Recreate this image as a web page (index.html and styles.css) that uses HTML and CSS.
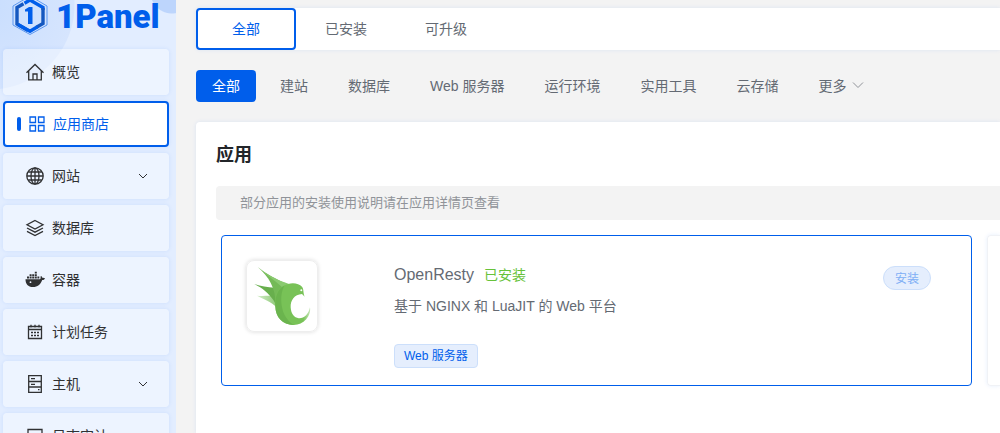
FILE: index.html
```html
<!DOCTYPE html>
<html lang="zh-CN">
<head>
  <meta charset="utf-8">
  <title>1Panel</title>
  <link rel="stylesheet" href="styles.css">
</head>
<body>
  <div class="app">
    <aside class="sidebar">
      <a class="logo" href="#">
        <svg class="logo-mark" width="36" height="36" viewBox="0 0 36 36" fill="none">
          <path d="M18 -4 L35 6 V25 L18 34.5 L1 25 V6 Z" stroke="#5b97f0" stroke-width="1"/>
          <path d="M16 30.5 L5 24 V7.5 L11.5 3.8" stroke="#1558c0" stroke-width="3.4"/>
          <path d="M12.5 3.2 L18 0 L31 7.5 V10" stroke="#005eeb" stroke-width="3.4"/>
          <path d="M31 8 V23.5 L24.5 27.3" stroke="#1558c0" stroke-width="3.4"/>
          <path d="M6 24.6 L18 31.2 L25.5 26.8" stroke="#005eeb" stroke-width="3.4"/>
          <path d="M13 9.5 L17 7 H20.5 V24 H16 V11.5 H13 Z" fill="#005eeb"/>
        </svg>
        <span class="logo-text">1Panel</span>
      </a>
      <nav class="menu">
        <a class="menu-item" href="#">
          <svg class="icon" viewBox="0 0 18 18"><path d="M.5 9.7 L9 1.5 L17.5 9.7 M2.7 8 V16.8 H15.3 V8 M7 16.5 V11 H11 V16.5"/></svg>
          <span>概览</span>
        </a>
        <a class="menu-item active" href="#">
          <svg class="icon" viewBox="0 0 16 16"><path d="M1 1 H6.5 V6.5 H1 Z M9.5 1 H15 V6.5 H9.5 Z M1 9.5 H6.5 V15 H1 Z M9.5 9.5 H15 V15 H9.5 Z"/></svg>
          <span>应用商店</span>
        </a>
        <a class="menu-item" href="#">
          <svg class="icon" viewBox="0 0 18 18"><circle cx="9" cy="9" r="8.2"/><ellipse cx="9" cy="9" rx="4" ry="8.2"/><path d="M9 1 V17 M1 9 H17 M2.2 5 H15.8 M2.2 13 H15.8"/></svg>
          <span>网站</span>
          <svg class="arrow" viewBox="0 0 10 10"><path d="M1 3 L5 7 L9 3"/></svg>
        </a>
        <a class="menu-item" href="#">
          <svg class="icon" viewBox="0 0 18 18"><path d="M9 1.5 L17 5.7 L9 10 L1 5.7 Z M1 9 L9 13.2 L17 9 M1 12.3 L9 16.5 L17 12.3"/></svg>
          <span>数据库</span>
        </a>
        <a class="menu-item" href="#">
          <svg class="icon solid" viewBox="0 0 18 18">
            <path d="M0 8.2 H14 C14.8 7.6 14.8 6.6 14.4 5.7 L15.3 5 C16 5.7 16.2 6.3 16.3 6.8 C17.3 6.6 18.2 6.8 19 7.2 C18.6 8.6 17.6 9 16.2 9 C14.6 13.6 11.5 16 7 16 C2 16 -.5 13 -.5 8.2 Z"/>
            <path d="M1 5.6 H3 V7.5 H1 Z M3.6 5.6 H5.6 V7.5 H3.6 Z M6.2 5.6 H8.2 V7.5 H6.2 Z M8.8 5.6 H10.8 V7.5 H8.8 Z M11.4 5.6 H13.3 V7.5 H11.4 Z M3.6 3.2 H5.6 V5 H3.6 Z M6.2 3.2 H8.2 V5 H6.2 Z M8.8 3.2 H10.8 V5 H8.8 Z M8.8 .8 H10.8 V2.6 H8.8 Z"/>
            <circle cx="4.5" cy="11.2" r=".9" fill="#edf3ff"/>
          </svg>
          <span>容器</span>
        </a>
        <a class="menu-item" href="#">
          <svg class="icon" viewBox="0 0 18 18"><path d="M2.5 3.5 H15.5 V15.5 H2.5 Z M2.5 6.5 H15.5 M5 1.8 V4.5 M9 1.8 V4.5 M13 1.8 V4.5"/><path d="M5 9.5 H13 M5 12.5 H13" stroke-dasharray="2 1"/></svg>
          <span>计划任务</span>
        </a>
        <a class="menu-item" href="#">
          <svg class="icon" viewBox="0 0 18 18"><path d="M2.7 .7 H15.3 V17.3 H2.7 Z M2.7 6.5 H15.3 M2.7 12 H15.3 M5 3.7 H9 M5 9.3 H9 M12 14.7 H13.5"/></svg>
          <span>主机</span>
          <svg class="arrow" viewBox="0 0 10 10"><path d="M1 3 L5 7 L9 3"/></svg>
        </a>
        <a class="menu-item" href="#">
          <svg class="icon" viewBox="0 0 18 18"><path d="M2 2.5 H16 V16 H2 Z M5 7 H9 M5 11 H12"/></svg>
          <span>日志审计</span>
        </a>
      </nav>
    </aside>

    <main class="main">
      <nav class="tabs">
        <button class="tab active" type="button">全部</button>
        <button class="tab" type="button">已安装</button>
        <button class="tab" type="button">可升级</button>
      </nav>

      <div class="tags">
        <button class="tag-btn active" type="button">全部</button>
        <button class="tag-btn" type="button">建站</button>
        <button class="tag-btn" type="button">数据库</button>
        <button class="tag-btn" type="button">Web 服务器</button>
        <button class="tag-btn" type="button">运行环境</button>
        <button class="tag-btn" type="button">实用工具</button>
        <button class="tag-btn" type="button">云存储</button>
        <button class="tag-btn more" type="button">更多
          <svg class="more-arrow" viewBox="0 0 12 12"><path d="M1 3.5 L6 8.5 L11 3.5"/></svg>
        </button>
      </div>

      <section class="panel">
        <h1 class="panel-title">应用</h1>
        <p class="notice">部分应用的安装使用说明请在应用详情页查看</p>
        <div class="app-list">
          <article class="app-card selected">
            <div class="app-icon">
              <svg viewBox="18 18 210 210">
                <defs>
                  <linearGradient id="tail" x1="0" y1="0" x2="1" y2="0">
                    <stop offset=".8" stop-color="#78c257"/>
                    <stop offset="1" stop-color="#c5e6b6"/>
                  </linearGradient>
                  <linearGradient id="feather" x1="0" y1="0" x2="1" y2="0">
                    <stop offset="0" stop-color="#d5eecb"/>
                    <stop offset="1" stop-color="#82c368"/>
                  </linearGradient>
                </defs>
                <path d="M48 122 C68 125 85 120 106 124 L116 168 C98 142 76 137 48 122 Z" fill="url(#feather)"/>
                <path d="M40 87 C60 94 80 97 100 98 L128 110 L124 190 C106 170 108 150 97 135 C82 114 65 100 40 87 Z" fill="#68af4d"/>
                <path d="M50 36 C78 58 108 74 140 88 L122 140 L104 150 C104 98 84 66 50 36 Z" fill="#74ba57"/>
                <path d="M64 48 C88 64 112 76 144 87 L126 100 C110 82 84 66 64 48 Z" fill="#8aca70"/>
                <path d="M128 92 C146 81 172 82 183 95 C189 103 186 112 191 125 L183 117 C160 118 148 136 149 157 C150 177 160 188 173 190 C190 191 203 177 207 157 C211 184 187 211 157 210 C126 209 104 188 103 153 C102 124 108 102 128 92 Z" fill="url(#tail)"/>
                <path d="M130 92 C116 118 119 155 131 181 C137 193 147 203 158 210 C124 209 103 187 103 153 C102 124 111 100 130 92 Z" fill="#6bb44e"/>
                <circle cx="181" cy="106" r="3" fill="#fff"/>
              </svg>
            </div>
            <div class="app-info">
              <div class="app-head">
                <span class="app-name">OpenResty</span>
                <span class="app-status">已安装</span>
                <button class="install" type="button" disabled>安装</button>
              </div>
              <p class="app-desc">基于 NGINX 和 LuaJIT 的 Web 平台</p>
              <span class="app-tag">Web 服务器</span>
            </div>
          </article>
          <article class="app-card next"></article>
        </div>
      </section>
    </main>
  </div>
</body>
</html>
```
FILE: styles.css
```css
* {
  box-sizing: border-box;
}

body {
  margin: 0;
  background: #f3f3f3;
  color: #646a73;
  font-family: "Liberation Sans", "Noto Sans CJK SC", sans-serif;
  font-size: 14px;
}

button {
  font-family: inherit;
  font-size: 14px;
  color: inherit;
  border: 0;
  background: none;
  padding: 0;
  cursor: pointer;
}

a {
  color: inherit;
  text-decoration: none;
}

svg {
  flex: none;
  overflow: visible;
}

.app {
  display: flex;
  height: 100vh;
  overflow: hidden;
}

/* sidebar */
.sidebar {
  flex: none;
  width: 176px;
  overflow: hidden;
  background:
    radial-gradient(circle at 172px -8px, #bdd5fc 21px, transparent 22px),
    radial-gradient(circle at -10px 5px, #c9defe 0, #d6e5fe 84px, transparent 85px),
    #e2edff;
}

.logo {
  display: flex;
  align-items: flex-start;
  gap: 8px;
  height: 49px;
  padding-left: 12px;
}

.logo-mark {
  overflow: hidden;
}

.logo-text {
  color: #005eeb;
  font-family: Roboto, sans-serif;
  font-size: 33px;
  font-weight: 900;
  line-height: 34px;
}

.menu {
  display: flex;
  flex-direction: column;
  gap: 6px;
  padding: 0 7px 0 3px;
}

.menu-item {
  display: flex;
  align-items: center;
  flex: none;
  gap: 8px;
  height: 46px;
  padding: 0 21px 0 23px;
  border-radius: 4px;
  background: rgba(255, 255, 255, 0.4);
  color: #303133;
  box-shadow: 0 0 4px rgba(0, 94, 235, 0.1);
}

.menu-item span {
  padding-bottom: 2px;
}

.menu-item.active {
  padding-left: 12px;
  border: 2px solid #005eeb;
  background: #fff;
  color: #005eeb;
}

.menu-item.active::before {
  content: "";
  width: 4px;
  height: 14px;
  border-radius: 2px;
  background: #005eeb;
}

.icon {
  width: 18px;
  height: 18px;
  fill: none;
  stroke: currentColor;
  stroke-width: 1.3;
}

.active .icon {
  width: 16px;
  height: 16px;
}

.icon.solid {
  fill: currentColor;
  stroke: none;
}

.arrow {
  width: 10px;
  height: 10px;
  margin-left: auto;
  fill: none;
  stroke: currentColor;
}

/* content */
.main {
  flex: 1;
  display: flex;
  flex-direction: column;
  gap: 20px;
  min-width: 0;
  padding: 8px 0 0 20px;
}

.tabs {
  display: flex;
  flex: none;
  height: 42px;
  border-radius: 4px 0 0 4px;
  background: #fff;
  box-shadow: 0 0 4px rgba(0, 94, 235, 0.1);
}

.tab {
  width: 100px;
  padding-bottom: 2px;
  border-radius: 4px;
}

.tab.active {
  border: 2px solid #005eeb;
  color: #005eeb;
}

.tags {
  display: flex;
  flex: none;
  gap: 8px;
}

.tag-btn {
  height: 32px;
  padding: 0 16px 2px;
  border-radius: 4px;
  white-space: nowrap;
}

.tag-btn.active {
  background: #005eeb;
  color: #fff;
}

.more {
  display: flex;
  align-items: center;
  gap: 6px;
}

.more-arrow {
  width: 12px;
  height: 12px;
  fill: none;
  stroke: #909399;
}

.panel {
  flex: 1;
  padding: 20px 0 0 20px;
  border-radius: 4px 0 0 0;
  background: #fff;
  box-shadow: 0 0 4px rgba(0, 94, 235, 0.1);
}

.panel-title {
  margin: 0 0 18px;
  color: #222529;
  font-size: 18px;
  line-height: 26px;
}

.notice {
  margin: 0 0 15px;
  padding: 0 24px;
  border-radius: 4px 0 0 4px;
  background: #f3f3f3;
  color: #909399;
  font-size: 13px;
  line-height: 34px;
}

.app-list {
  display: grid;
  grid-template-columns: 1fr 13px;
  gap: 15px;
  padding-left: 5px;
}

.app-card {
  display: flex;
  border: 1px solid #f0f2f6;
  border-radius: 4px;
  padding: 24px 40px 17px 24px;
}

.app-card.selected {
  border-color: #005eeb;
}

.app-card.next {
  padding: 0;
  border-right: 0;
  border-radius: 4px 0 0 4px;
  box-shadow: 0 0 4px rgba(0, 94, 235, 0.1);
}

.app-icon {
  flex: none;
  width: 72px;
  height: 72px;
  margin-right: 76px;
  border: 1px solid #eee;
  border-radius: 8px;
  box-shadow: 0 0 4px rgba(0, 0, 0, 0.15);
}

.app-icon svg {
  display: block;
}

.app-info {
  flex: 1;
}

.app-head {
  display: flex;
  align-items: baseline;
  gap: 10px;
  height: 32px;
  padding: 4px 0 2px;
}

.app-name {
  font-size: 16px;
}

.app-status {
  color: #67c23a;
}

.install {
  align-self: flex-end;
  height: 24px;
  margin-left: auto;
  padding: 0 11px 1px;
  border: 1px solid #ccdffb;
  border-radius: 12px;
  background: #e5eefd;
  color: #80aff5;
  font-size: 12px;
}

.app-desc {
  margin: 4px 0 28px;
  line-height: 20px;
}

.app-tag {
  display: inline-block;
  padding: 0 9px;
  border: 1px solid #ccdffb;
  border-radius: 4px;
  background: #e5eefd;
  color: #005eeb;
  font-size: 12px;
  line-height: 22px;
}
```
